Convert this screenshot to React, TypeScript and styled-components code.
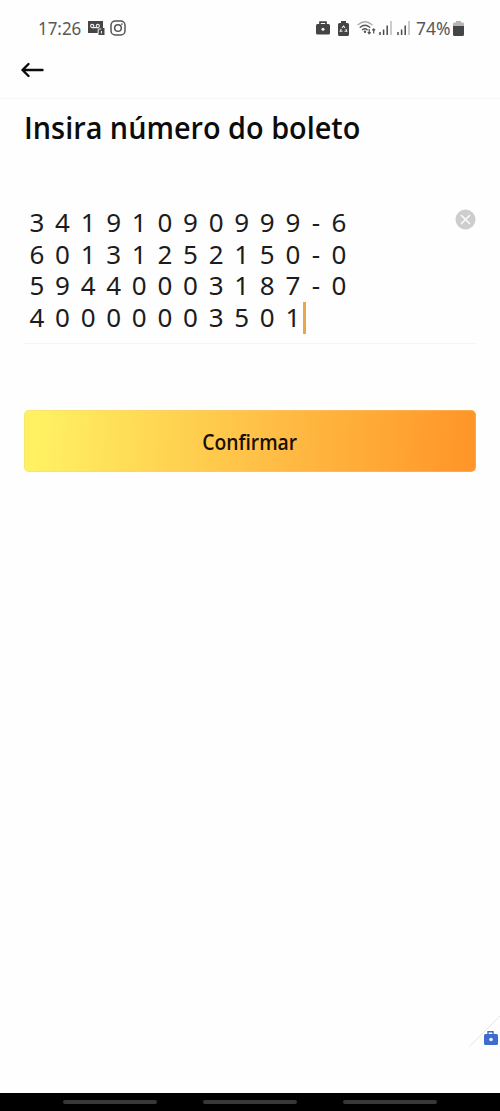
import React from 'react';
import styled, { createGlobalStyle } from 'styled-components';

const GlobalStyle = createGlobalStyle`
  * { box-sizing: border-box; }
  body { margin: 0; background: #fefefe; font-family: 'Noto Sans', 'Open Sans', sans-serif; }
`;

const Screen = styled.div`
  width: 500px;
  height: 1111px;
  display: flex;
  flex-direction: column;
  background: #fefefe;
  overflow: hidden;
`;

const StatusBar = styled.header`
  height: 56px;
  padding: 0 36px 0 38px;
  display: flex;
  align-items: center;
  justify-content: space-between;
  color: #58585a;
`;

const StatusGroup = styled.div`
  display: flex;
  align-items: center;
`;

const StatusText = styled.span<{ $width: number; $scale: number; $gap?: number }>`
  width: ${({ $width }) => $width}px;
  margin-left: ${({ $gap = 0 }) => $gap}px;
  font-size: 18px;
  line-height: 24px;
  white-space: nowrap;
  transform: scaleX(${({ $scale }) => $scale});
  transform-origin: left center;
`;

const Glyph = styled.svg<{ $gap?: number }>`
  display: block;
  flex: none;
  margin-left: ${({ $gap = 0 }) => $gap}px;
`;

const NavBar = styled.nav`
  height: 43px;
  padding: 5px 0 0 20px;
  border-bottom: 1px solid #f6f6f6;
`;

const BackButton = styled.button`
  display: block;
  padding: 0;
  border: 0;
  background: none;
`;

const Content = styled.main`
  flex: 1;
  padding: 0 24px;
  display: flex;
  flex-direction: column;
`;

const Title = styled.h1`
  margin: 7px 0 0;
  width: max-content;
  font-family: 'Open Sans', 'Noto Sans', sans-serif;
  font-size: 31px;
  line-height: 42px;
  font-weight: 620;
  color: #0c0c0c;
  white-space: nowrap;
  transform: scaleX(0.93);
  transform-origin: left center;
`;

const Field = styled.div`
  display: flex;
  justify-content: space-between;
  height: 137px;
  margin-top: 59px;
  padding-left: 5.5px;
  border-bottom: 1px solid #f5f5f5;
`;

const Digits = styled.div`
  font-size: 26px;
  font-weight: 380;
  letter-spacing: 1.98px;
  color: #1c1c1c;
  white-space: nowrap;
`;

const DigitRow = styled.div`
  display: flex;
  align-items: center;
  height: 31.5px;
  line-height: 31.5px;
  white-space: pre;
`;

const CheckDigit = styled.span`
  margin-left: 0.2px;
  word-spacing: 0.6px;
`;

const Caret = styled.span`
  width: 3px;
  height: 32px;
  margin: 1px 0 0 1px;
  background: #eda647;
`;

const ClearButton = styled.button`
  align-self: flex-start;
  margin-top: 2px;
  padding: 0;
  border: 0;
  background: none;
`;

const ConfirmButton = styled.button`
  height: 62px;
  margin-top: 66px;
  padding: 1px 0 0;
  border: 1px solid rgba(245, 205, 130, 0.35);
  border-radius: 5px;
  background: linear-gradient(93deg, #fff162 3%, #ffc047 52%, #ff9629 98%) border-box;
  color: #171006;
  font-family: 'Open Sans', 'Noto Sans', sans-serif;
  font-size: 21px;
  font-weight: 600;
`;

const ConfirmLabel = styled.span`
  display: inline-block;
  transform: scaleX(0.92);
`;

const EdgeHandle = styled.div`
  display: flex;
  justify-content: flex-end;
  padding-bottom: 45px;
`;

const SystemBar = styled.footer`
  height: 18px;
  display: flex;
  justify-content: center;
  gap: 46px;
  padding-top: 7px;
  background: #000;
`;

const NavHint = styled.span`
  width: 94px;
  height: 4px;
  border-radius: 2px;
  background: #383838;
`;

const rows = [
  { digits: '3 4 1 9 1 0 9 0 9 9 9', check: ' - 6' },
  { digits: '6 0 1 3 1 2 5 2 1 5 0', check: ' - 0' },
  { digits: '5 9 4 4 0 0 0 3 1 8 7', check: ' - 0' },
  { digits: '4 0 0 0 0 0 0 3 5 0 1', check: '' },
];

const Voicemail = () => (
  <Glyph width="18" height="16" viewBox="0 0 18 16">
    <path d="M1 1h15v7h1.5v7h-6v-2H1z" fill="#464648" />
    <g fill="none" stroke="#eee" strokeWidth="1.1">
      <circle cx="5.2" cy="6" r="1.6" />
      <circle cx="10.8" cy="6" r="1.6" />
      <path d="M5.2 7.6h5.6M11.2 9.5V13M11.2 9h3M14.4 11v2.5" />
    </g>
  </Glyph>
);

const Camera = () => (
  <Glyph $gap={5} width="16" height="16" viewBox="0 0 16 16" fill="none" stroke="#555557" strokeWidth="1.5">
    <rect x="1" y="1" width="14" height="14" rx="4.3" />
    <circle cx="8" cy="8" r="3.3" />
    <circle cx="11.9" cy="4.1" r=".5" fill="#555557" strokeWidth=".7" />
  </Glyph>
);

const LockedCase = () => (
  <Glyph width="14" height="14" viewBox="0 0 14 14">
    <path d="M4 4V1.2h6V4" fill="none" stroke="#444446" strokeWidth="1.7" />
    <rect y="3" width="14" height="10.5" rx="1.5" fill="#444446" />
    <circle cx="7" cy="8.2" r="1.5" fill="#f5f5f5" />
  </Glyph>
);

const BatterySaver = () => (
  <Glyph $gap={8} width="11" height="15" viewBox="0 0 11 15">
    <path d="M3 0h5v2h1.5q1.5 0 1.5 1.5v10q0 1.5-1.5 1.5h-8Q0 15 0 13.5v-10Q0 2 1.5 2H3z" fill="#444446" />
    <path d="M4 6.8 5.5 5 7 6.8M7.8 8l1 2.3H6.5M3.2 8l-1 2.3h2.4" fill="none" stroke="#eee" strokeWidth="1.1" />
  </Glyph>
);

const Wifi = () => (
  <Glyph $gap={8} width="20" height="16" viewBox="0 0 20 16">
    <g fill="none" strokeLinecap="round" strokeWidth="1.3">
      <path d="M1 4.7Q8 -1.2 15 4.7" stroke="#aaa" />
      <path d="M3.2 7.3Q8 3.2 12.8 7.3" stroke="#555" />
      <path d="M5.5 9.8Q8 7.7 10.2 9.8" stroke="#555" />
    </g>
    <circle cx="8" cy="11.8" r="1.2" fill="#555" />
    <path d="M12.2 9v4.5M10.8 12.2l1.4 1.6 1.4-1.6M16.7 13.5V9M15.3 10.4l1.4-1.6 1.4 1.6" fill="none" stroke="#555" strokeWidth="1.2" />
  </Glyph>
);

const Signal = ({ gap }: { gap: number }) => (
  <Glyph $gap={gap} width="13" height="14" viewBox="0 0 13 14" strokeWidth="1.5">
    <path d="M1 14v-3M4.6 14V8.5M8.2 14V4.5" stroke="#4b4b4d" />
    <path d="M12 14V0" stroke="#bbb" />
  </Glyph>
);

const Battery = () => (
  <Glyph width="11" height="15" viewBox="0 0 11 15">
    <path d="M3 0h5v1.5h2Q11 1.5 11 3v2H0V3q0-1.5 1-1.5h2z" fill="#b5b5b5" />
    <path d="M0 5h11v8.5q0 1.5-1.5 1.5h-8Q0 15 0 13.5z" fill="#454547" />
  </Glyph>
);

export default function App() {
  return (
    <Screen>
      <GlobalStyle />
      <StatusBar>
        <StatusGroup>
          <StatusText $width={49} $scale={0.94}>17:26</StatusText>
          <Voicemail />
          <Camera />
        </StatusGroup>
        <StatusGroup>
          <LockedCase />
          <BatterySaver />
          <Wifi />
          <Signal gap={2} />
          <Signal gap={5} />
          <StatusText $width={37} $scale={0.97} $gap={6}>74%</StatusText>
          <Battery />
        </StatusGroup>
      </StatusBar>
      <NavBar>
        <BackButton aria-label="Voltar">
          <Glyph width="24" height="18" viewBox="0 0 24 18" fill="none" stroke="#0b0b0b" strokeWidth="2.4" strokeLinecap="round" strokeLinejoin="round">
            <path d="M22.5 9H2.5M8.5 3l-6 6 6 6" />
          </Glyph>
        </BackButton>
      </NavBar>
      <Content>
        <Title>Insira número do boleto</Title>
        <Field>
          <Digits>
            {rows.map(({ digits, check }) => (
              <DigitRow key={digits}>
                {digits}
                {check ? <CheckDigit>{check}</CheckDigit> : <Caret />}
              </DigitRow>
            ))}
          </Digits>
          <ClearButton aria-label="Limpar">
            <Glyph width="21" height="21" viewBox="0 0 21 21">
              <circle cx="10.5" cy="10.5" r="10" fill="#cdcdcd" />
              <path d="m6.5 6.5 8 8m0-8-8 8" stroke="#fafafa" strokeWidth="1.7" strokeLinecap="round" />
            </Glyph>
          </ClearButton>
        </Field>
        <ConfirmButton>
          <ConfirmLabel>Confirmar</ConfirmLabel>
        </ConfirmButton>
      </Content>
      <EdgeHandle>
        <Glyph width="32" height="32" viewBox="0 0 32 32">
          <path d="M1 31 32 0" stroke="#e7e7e2" strokeWidth="1" />
          <path d="M20 18.5v-2.7h5v2.7" fill="none" stroke="#3d6bc9" strokeWidth="1.4" />
          <rect x="16" y="18" width="14" height="11" rx="1.5" fill="#3d6bd0" />
          <circle cx="23" cy="23.5" r="1.8" fill="#e8f1ff" />
        </Glyph>
      </EdgeHandle>
      <SystemBar>
        <NavHint />
        <NavHint />
        <NavHint />
      </SystemBar>
    </Screen>
  );
}
